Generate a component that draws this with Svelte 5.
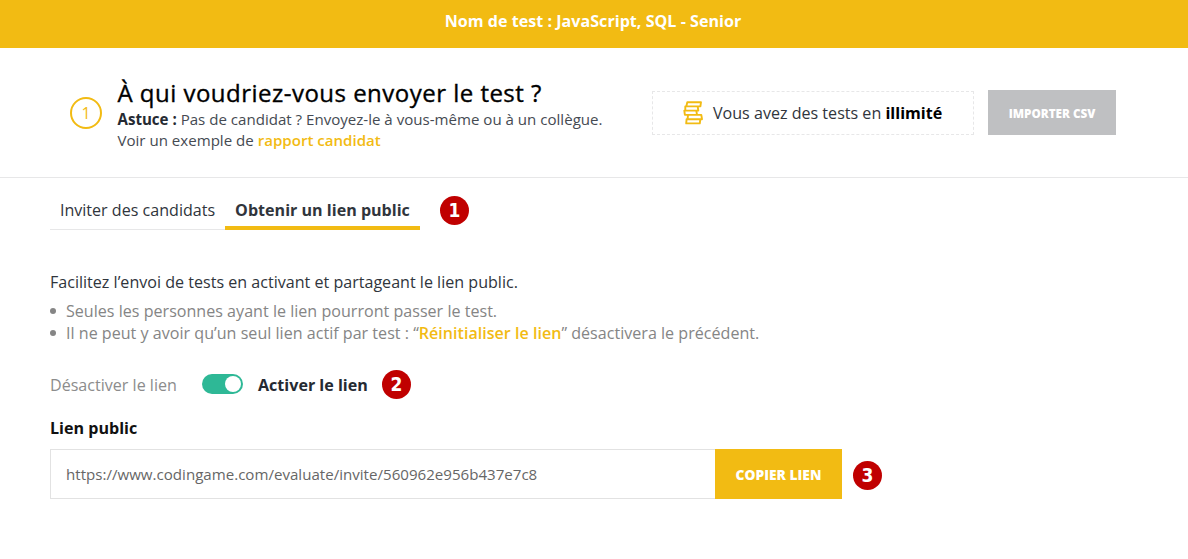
<script lang="ts">
	let enabled = true;
	let activeTab = 1;

	const testName = 'JavaScript, SQL - Senior';
	const publicLink = 'https://www.codingame.com/evaluate/invite/560962e956b437e7c8';
	const tabs = ['Inviter des candidats', 'Obtenir un lien public'];
</script>

<div class="banner">Nom de test : {testName}</div>

<header>
	<div class="step">1</div>
	<div class="intro">
		<h1>À qui voudriez-vous envoyer le test ?</h1>
		<p class="tip"><b>Astuce :</b> Pas de candidat ? Envoyez-le à vous-même ou à un collègue.</p>
		<p class="sample">Voir un exemple de <a href="#rapport">rapport candidat</a></p>
	</div>
	<div class="credits">
		<svg width="20" height="24" viewBox="0 0 20 24">
			<path d="M4.3 1.2H18L17.4 5.4H3.3ZM2.3 5.4H14.7L15.3 9.6H2.3ZM1.3 9.6H13.3L14 13.9H1.9ZM5 13.9H18.3L19 18.2H4.6ZM3.6 18.2H17.3L16.8 22.4H3.2Z" />
		</svg>
		<span>Vous avez des tests en <b>illimité</b></span>
	</div>
	<button class="import" disabled>IMPORTER CSV</button>
</header>

<main>
	<div class="tabs">
		{#each tabs as tab, i}
			<button class="tab" class:active={activeTab === i} on:click={() => activeTab = i}>{tab}</button>
		{/each}
		<span class="badge">1</span>
	</div>

	<p class="lead">Facilitez l’envoi de tests en activant et partageant le lien public.</p>
	<ul>
		<li>Seules les personnes ayant le lien pourront passer le test.</li>
		<li>Il ne peut y avoir qu’un seul lien actif par test : “<a href="#reset">Réinitialiser le lien</a>” désactivera le précédent.</li>
	</ul>

	<div class="toggle">
		<span class="off">Désactiver le lien</span>
		<button class="switch" class:enabled aria-label="Activer le lien" on:click={() => enabled = !enabled}></button>
		<span class="on">Activer le lien</span>
		<span class="badge">2</span>
	</div>

	<div class="label">Lien public</div>
	<div class="share">
		<div class="url"><span>{publicLink}</span></div>
		<button class="copy">COPIER LIEN</button>
		<span class="badge">3</span>
	</div>
</main>

<style>
	:global(body) {
		background: #fff;
		color: #30353c;
		font-family: "Open Sans", sans-serif;
		font-size: 16.08px;
	}

	button {
		border: none;
		font-family: inherit;
		padding: 0;
		white-space: nowrap;
	}

	h1, p, ul {
		margin: 0;
		white-space: nowrap;
	}

	a {
		color: #f2bb13;
		font-weight: 600;
		text-decoration: none;
	}

	.banner {
		background: #f2bb13;
		box-sizing: border-box;
		color: #fff;
		font-weight: 700;
		height: 48px;
		letter-spacing: .02px;
		line-height: 22px;
		padding: 10px 2px 0 0;
		text-align: center;
	}

	header {
		border-bottom: 1px solid #e7e7e8;
		box-sizing: border-box;
		display: flex;
		height: 130px;
		padding: 0 72px 0 70px;
	}

	.step {
		border: 2px solid #f2bb13;
		border-radius: 50%;
		box-sizing: border-box;
		color: #f2bb13;
		font-size: 16px;
		height: 32px;
		line-height: 28px;
		margin-top: 49px;
		text-align: center;
		width: 32px;
	}

	.intro {
		color: #454a52;
		flex: 1;
		font-size: 15.09px;
		line-height: 21px;
		margin-left: 15.5px;
		padding-top: 29px;
	}

	h1 {
		-webkit-text-stroke: .35px #000;
		color: #000;
		font-size: 24px;
		font-weight: 400;
		letter-spacing: .48px;
		line-height: 32px;
	}

	.tip b {
		color: #252a32;
	}

	.credits {
		align-items: center;
		border: 1px dashed #e7e7e8;
		box-sizing: border-box;
		display: flex;
		gap: 10px;
		height: 44px;
		margin: 43px 14px 0 0;
		padding-left: 30px;
		white-space: nowrap;
		width: 322px;
	}

	.credits b {
		color: #000;
	}

	.credits svg {
		fill: none;
		flex: none;
		stroke: #f2bb13;
		stroke-linejoin: round;
		stroke-width: 1.9;
	}

	.import {
		background: #bfc0c2;
		color: #fff;
		font-size: 11.7px;
		font-weight: 800;
		height: 45px;
		margin-top: 42px;
		padding-top: 1px;
		width: 128px;
	}

	main {
		padding: 12px 50px 0;
	}

	.tabs {
		display: flex;
		height: 40px;
	}

	.tab {
		background: none;
		border-bottom: 1px solid #e7e7e8;
		box-sizing: border-box;
		color: #30353c;
		font-size: 16.08px;
		width: 175px;
	}

	.tab.active {
		border-bottom: 4px solid #f2bb13;
		font-weight: 700;
		padding-top: 3px;
		width: 195px;
	}

	.badge {
		background: #c00000;
		border-radius: 50%;
		color: #fff;
		flex: none;
		font-family: "DejaVu Sans Condensed", "DejaVu Sans", sans-serif;
		font-size: 19px;
		font-stretch: condensed;
		font-weight: 700;
		height: 29px;
		line-height: 29px;
		text-align: center;
		width: 29px;
	}

	.tabs .badge {
		margin: 6px 0 0 20px;
	}

	.lead {
		line-height: 22px;
		margin-top: 41px;
	}

	ul {
		color: #858585;
		line-height: 22px;
		list-style: none;
		margin-top: 7px;
		padding: 0;
	}

	li {
		align-items: center;
		display: flex;
		letter-spacing: .01px;
		white-space: pre;
	}

	li::before {
		background: #858585;
		border-radius: 50%;
		content: "";
		height: 6px;
		margin-right: 10px;
		width: 6px;
	}

	.toggle {
		align-items: center;
		display: flex;
		height: 30px;
		margin-top: 25px;
		white-space: nowrap;
	}

	.off, .on {
		padding-top: 2px;
	}

	.off {
		color: #8c8c8c;
		width: 152px;
	}

	.switch {
		background: #b0b0b0;
		border-radius: 10px;
		display: flex;
		height: 20px;
		padding: 2px;
		width: 41px;
	}

	.switch::after {
		background: #fff;
		border-radius: 50%;
		content: "";
		height: 16px;
		width: 16px;
	}

	.switch.enabled {
		background: #2eb896;
		justify-content: flex-end;
	}

	.on {
		color: #252a32;
		font-weight: 700;
		margin-left: 15px;
		width: 124px;
	}

	.label {
		color: #111;
		font-weight: 700;
		line-height: 22px;
		margin-top: 18px;
	}

	.share {
		display: flex;
		margin-top: 10px;
	}

	.url {
		border: 1px solid #e2e2e2;
		border-right: none;
		box-sizing: border-box;
		color: #666;
		font-size: 15.1px;
		height: 50px;
		line-height: 49px;
		padding-left: 15px;
		width: 665px;
	}

	.copy {
		background: #f2bb13;
		color: #fff;
		font-size: 13.8px;
		font-weight: 800;
		width: 127px;
	}

	.share .badge {
		margin: 12px 0 0 11px;
	}
</style>
